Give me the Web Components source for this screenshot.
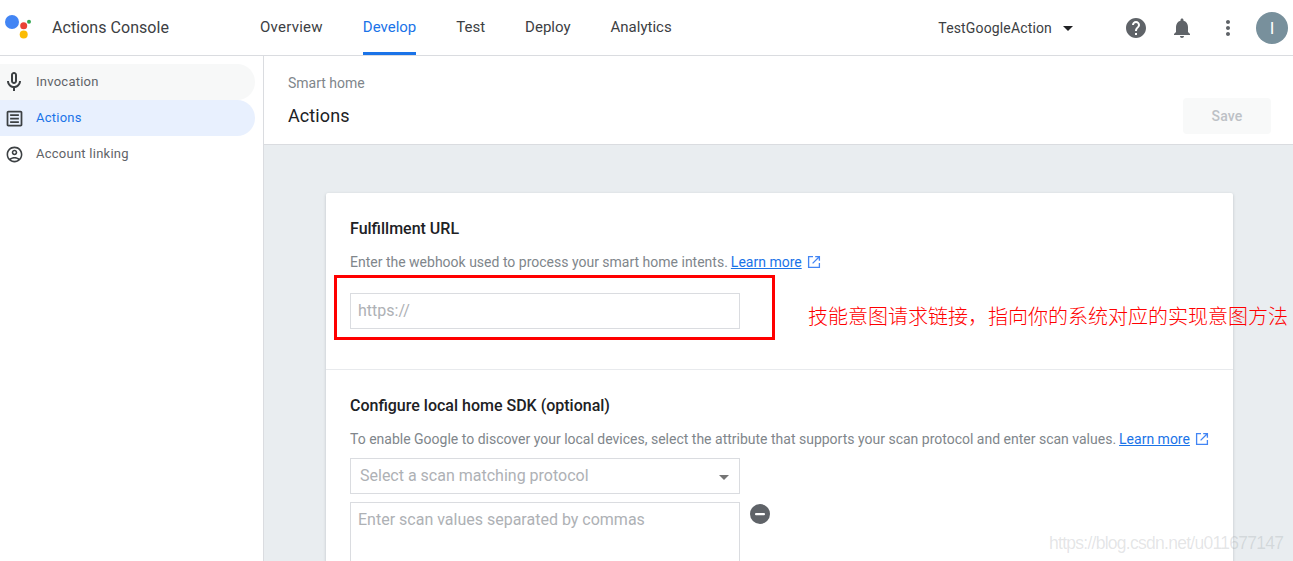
<!DOCTYPE html>
<html lang="en">
<head>
<meta charset="utf-8">
<title>Actions Console</title>
<style>
  html, body { margin: 0; height: 561px; overflow: hidden; background: #fff; }
  body { font-family: Roboto, "Liberation Sans", sans-serif; display: flex; flex-direction: column; }
</style>
</head>
<body>
<ac-header></ac-header>
<ac-layout>
  <ac-sidebar slot="side">
    <ac-nav-item icon="mic" size="24" hovered>Invocation</ac-nav-item>
    <ac-nav-item icon="article" size="21" active>Actions</ac-nav-item>
    <ac-nav-item icon="account" size="19">Account linking</ac-nav-item>
  </ac-sidebar>
  <ac-page-head slot="head" crumb="Smart home" heading="Actions"></ac-page-head>
  <ac-card slot="body">
    <ac-section heading="Fulfillment URL" size="177">
      <ac-hint>Enter the webhook used to process your smart home intents.</ac-hint>
      <ac-field spaced placeholder="https://"></ac-field>
    </ac-section>
    <ac-section heading="Configure local home SDK (optional)">
      <ac-hint>To enable Google to discover your local devices, select the attribute that supports your scan protocol and enter scan values.</ac-hint>
      <ac-field select placeholder="Select a scan matching protocol"></ac-field>
      <ac-field area removable placeholder="Enter scan values separated by commas"></ac-field>
    </ac-section>
  </ac-card>
</ac-layout>
<ac-note></ac-note>

<script>
const ICONS = {
  mic: '<path d="M12 14c1.66 0 3-1.34 3-3V5c0-1.66-1.34-3-3-3S9 3.34 9 5v6c0 1.66 1.34 3 3 3zm-1-9c0-.55.45-1 1-1s1 .45 1 1v6c0 .55-.45 1-1 1s-1-.45-1-1V5zm6 6c0 2.76-2.24 5-5 5s-5-2.24-5-5H5c0 3.53 2.61 6.43 6 6.92V21h2v-3.08c3.39-.49 6-3.39 6-6.92h-2z"/>',
  article: '<path d="M19 5v14H5V5h14m0-2H5c-1.1 0-2 .9-2 2v14c0 1.1.9 2 2 2h14c1.1 0 2-.9 2-2V5c0-1.1-.9-2-2-2zM17 17H7v-2h10v2zm0-4H7v-2h10v2zm0-4H7V7h10v2z"/>',
  account: '<path d="M12 2C6.48 2 2 6.48 2 12s4.48 10 10 10 10-4.48 10-10S17.52 2 12 2zM7.35 18.5C8.66 17.56 10.26 17 12 17s3.34.56 4.65 1.5c-1.31.94-2.91 1.5-4.65 1.5s-3.34-.56-4.65-1.5zm10.79-1.38C16.45 15.8 14.32 15 12 15s-4.45.8-6.14 2.12C4.7 15.73 4 13.95 4 12c0-4.42 3.58-8 8-8s8 3.58 8 8c0 1.95-.7 3.73-1.86 5.12zM12 6c-1.93 0-3.5 1.57-3.5 3.5S10.07 13 12 13s3.5-1.57 3.5-3.5S13.93 6 12 6zm0 5c-.83 0-1.5-.67-1.5-1.5S11.17 8 12 8s1.5.67 1.5 1.5S12.83 11 12 11z"/>',
  help: '<path d="M12 2C6.48 2 2 6.48 2 12s4.48 10 10 10 10-4.48 10-10S17.52 2 12 2zm1 17h-2v-2h2v2zm2.07-7.75l-.9.92C13.45 12.9 13 13.5 13 15h-2v-.5c0-1.1.45-2.1 1.17-2.83l1.24-1.26c.37-.36.59-.86.59-1.41 0-1.1-.9-2-2-2s-2 .9-2 2H8c0-2.21 1.79-4 4-4s4 1.79 4 4c0 .88-.36 1.68-.93 2.25z"/>',
  bell: '<path d="M12 22c1.1 0 2-.9 2-2h-4c0 1.1.89 2 2 2zm6-6v-5c0-3.07-1.64-5.64-4.5-6.32V4c0-.83-.67-1.5-1.5-1.5s-1.5.67-1.5 1.5v.68C7.63 5.36 6 7.92 6 11v5l-2 2v1h16v-1l-2-2z"/>',
  more: '<path d="M12 8c1.1 0 2-.9 2-2s-.9-2-2-2-2 .9-2 2 .9 2 2 2zm0 2c-1.1 0-2 .9-2 2s.9 2 2 2 2-.9 2-2-.9-2-2-2zm0 6c-1.1 0-2 .9-2 2s.9 2 2 2 2-.9 2-2-.9-2-2-2z"/>'
};

function icon(name, size) {
  return `<svg width="${size}" height="${size}" viewBox="0 0 24 24" fill="currentColor">${ICONS[name]}</svg>`;
}

class AcHeader extends HTMLElement {
  connectedCallback() {
    const root = this.attachShadow({ mode: "open" });
    root.innerHTML = `
      <style>
        :host { display: flex; align-items: stretch; height: 55px; flex: none; border-bottom: 1px solid #dadce0; }
        .logo { width: 52px; flex: none; }
        .logo svg { display: block; }
        .name { width: 200px; flex: none; font-size: 16px; color: #3c4043; line-height: 55px; letter-spacing: .05px; }
        nav { display: flex; gap: 40px; margin-left: 8px; }
        nav a { display: block; font-size: 15px; line-height: 55px; color: #3c4043; }
        nav a.wide { letter-spacing: .25px; }
        nav a.on { color: #1a73e8; box-shadow: inset 0 -3px 0 #1a73e8; }
        .right { margin-left: auto; display: flex; align-items: center; }
        .project { font-size: 14px; color: #3c4043; letter-spacing: .15px; }
        .caret { width: 0; height: 0; margin: 2px 0 0 11px; border: 5px solid transparent; border-top-color: #202124; border-bottom: 0; }
        .icons { display: flex; align-items: center; color: #5f6368; margin-left: 51px; gap: 22px; }
        .icons svg { display: block; }
        .avatar { width: 32px; height: 32px; border-radius: 50%; background: #78909c; color: #fff; font-size: 17px; line-height: 32px; text-align: center; margin: 0 5px 0 16px; }
      </style>
      <div class="logo">
        <svg width="52" height="55" viewBox="0 0 52 55">
          <circle cx="12" cy="22" r="7" fill="#4285f4"/>
          <circle cx="23.7" cy="25.7" r="3.5" fill="#ea4335"/>
          <circle cx="23.7" cy="34.4" r="4" fill="#fbbc04"/>
          <circle cx="29" cy="21.7" r="2" fill="#34a853"/>
        </svg>
      </div>
      <div class="name">Actions Console</div>
      <nav>
        <a class="wide">Overview</a><a class="on">Develop</a><a>Test</a><a>Deploy</a><a>Analytics</a>
      </nav>
      <div class="right">
        <span class="project">TestGoogleAction</span><span class="caret"></span>
        <div class="icons">${icon("help", 24)}${icon("bell", 24)}${icon("more", 24)}</div>
        <div class="avatar">I</div>
      </div>`;
  }
}

class AcLayout extends HTMLElement {
  constructor() {
    super();
    this.attachShadow({ mode: "open" }).innerHTML = `
      <style>
        :host { display: grid; grid-template-columns: 264px 1fr; grid-template-rows: 89px 1fr; flex: 1; min-height: 0; overflow: hidden; }
        .side { grid-row: 1 / 3; border-right: 1px solid #dadce0; }
        .head { border-bottom: 1px solid #dadce0; }
        .body { background: #e9edf0; padding: 48px 60px 0 62px; min-height: 0; overflow: hidden; }
      </style>
      <div class="side"><slot name="side"></slot></div>
      <div class="head"><slot name="head"></slot></div>
      <div class="body"><slot name="body"></slot></div>`;
  }
}

class AcSidebar extends HTMLElement {
  constructor() {
    super();
    this.attachShadow({ mode: "open" }).innerHTML = `
      <style>
        :host { display: flex; flex-direction: column; padding: 8px 8px 0 0; }
      </style>
      <slot></slot>`;
  }
}

class AcNavItem extends HTMLElement {
  connectedCallback() {
    const root = this.attachShadow({ mode: "open" });
    root.innerHTML = `
      <style>
        :host { display: flex; align-items: center; height: 36px; border-radius: 0 18px 18px 0; font-size: 13px; color: #5f6368; padding-left: 2px; gap: 10px; letter-spacing: .25px; }
        :host([hovered]) { background: #f7f8f8; }
        :host([active]) { background: #e8f0fe; color: #1a73e8; }
        .ic { width: 24px; height: 24px; display: flex; align-items: center; justify-content: center; color: #3c4043; flex: none; }
        svg { display: block; }
        .txt { margin-bottom: 2px; }
      </style>
      <span class="ic">${icon(this.getAttribute("icon"), this.getAttribute("size"))}</span>
      <span class="txt"><slot></slot></span>`;
  }
}

class AcPageHead extends HTMLElement {
  connectedCallback() {
    const root = this.attachShadow({ mode: "open" });
    root.innerHTML = `
      <style>
        :host { display: block; height: 88px; padding: 19px 22px 0 24px; box-sizing: border-box; }
        .crumb { font-size: 14px; line-height: 16px; color: #80868b; }
        .row { display: flex; align-items: flex-start; justify-content: space-between; margin-top: 7px; }
        h1 { margin: 6px 0 0; font-size: 18px; font-weight: 400; color: #202124; line-height: 24px; letter-spacing: .1px; }
        button { width: 88px; height: 36px; border: 0; border-radius: 4px; background: #f8f9f9; color: #bdc1c6; font: 500 14px Roboto, sans-serif; letter-spacing: .2px; }
      </style>
      <div class="crumb">${this.getAttribute("crumb")}</div>
      <div class="row">
        <h1>${this.getAttribute("heading")}</h1>
        <button>Save</button>
      </div>`;
  }
}

class AcCard extends HTMLElement {
  constructor() {
    super();
    this.attachShadow({ mode: "open" }).innerHTML = `
      <style>
        :host { display: block; background: #fff; border-radius: 2px; box-shadow: 0 1px 3px rgba(60,64,67,.25); }
        ::slotted(ac-section:not(:last-child)) { border-bottom: 1px solid #e8eaed; }
      </style>
      <slot></slot>`;
  }
}

class AcSection extends HTMLElement {
  connectedCallback() {
    const root = this.attachShadow({ mode: "open" });
    const size = this.getAttribute("size");
    root.innerHTML = `
      <style>
        :host { display: block; padding: 25px 24px 0; height: ${size ? size + "px" : "auto"}; box-sizing: border-box; }
        h2 { margin: 0 0 12px; font-size: 16px; font-weight: 500; line-height: 22px; color: #202124; }
        .list { display: flex; flex-direction: column; gap: 8px; }
      </style>
      <h2>${this.getAttribute("heading")}</h2>
      <div class="list"><slot></slot></div>`;
  }
}

class AcHint extends HTMLElement {
  constructor() {
    super();
    this.attachShadow({ mode: "open" }).innerHTML = `
      <style>
        :host { display: flex; align-items: center; font-size: 14px; line-height: 20px; color: #80868b; white-space: nowrap; margin-bottom: 1px; }
        a { color: #1a73e8; text-decoration: underline; margin-left: 3px; }
        svg { display: block; margin-left: 5px; }
      </style>
      <span><slot></slot></span>
      <a>Learn more</a>
      <svg width="14" height="14" viewBox="0 0 14 14" fill="none" stroke="#4285f4" stroke-width="1.3">
        <path d="M6 1.6H1.6v10.8h10.8V8"/><path d="M5.6 8.4 12 2M8.2 1.6h4.2v4.2"/>
      </svg>`;
  }
}

class AcField extends HTMLElement {
  connectedCallback() {
    const root = this.attachShadow({ mode: "open" });
    const isSelect = this.hasAttribute("select");
    const isArea = this.hasAttribute("area");
    const remove = this.hasAttribute("removable")
      ? `<svg class="remove" width="20" height="20" viewBox="0 0 20 20"><circle cx="10" cy="10" r="10" fill="#5f6368"/><rect x="5" y="9" width="10" height="2.2" rx="1" fill="#fff"/></svg>`
      : "";
    root.innerHTML = `
      <style>
        :host { display: flex; align-items: flex-start; gap: 10px; }
        :host([spaced]) { margin-top: 12px; }
        .box { width: 390px; box-sizing: border-box; height: ${isArea ? "120px" : "36px"}; border: 1px solid #dadce0; display: flex; align-items: ${isArea ? "flex-start" : "center"}; justify-content: space-between; padding: ${isArea ? "6px 7px" : isSelect ? "0 10px 0 9px" : "0 7px"}; font-size: 16px; line-height: 22px; color: #aeb1b5; flex: none; background: #fff; }
        .tri { width: 0; height: 0; border: 5px solid transparent; border-top-color: #757575; border-bottom: 0; margin-top: 2px; }
        .remove { margin-top: 2px; }
      </style>
      <div class="box"><span>${this.getAttribute("placeholder")}</span>${isSelect ? '<span class="tri"></span>' : ""}</div>
      ${remove}`;
  }
}

// the red annotation and the blog watermark sit on top of the screenshot
class AcNote extends HTMLElement {
  constructor() {
    super();
    this.attachShadow({ mode: "open" }).innerHTML = `
      <style>
        :host { position: absolute; inset: 0; display: block; pointer-events: none; overflow: hidden; }
        .frame { position: absolute; left: 334px; top: 275px; width: 441px; height: 65px; box-sizing: border-box; border: 3px solid #f00; }
        .label { position: absolute; left: 808px; top: 303px; font: 300 20px/26px "Noto Sans CJK SC", sans-serif; color: #f00; white-space: nowrap; }
        .mark { position: absolute; left: 1049px; top: 532px; font: 17.5px/22px "Liberation Sans", sans-serif; letter-spacing: -.73px; color: rgba(120,125,130,.2); white-space: nowrap; }
      </style>
      <div class="frame"></div>
      <div class="label">技能意图请求链接，指向你的系统对应的实现意图方法</div>
      <div class="mark">https://blog.csdn.net/u011677147</div>`;
  }
}

customElements.define("ac-header", AcHeader);
customElements.define("ac-layout", AcLayout);
customElements.define("ac-sidebar", AcSidebar);
customElements.define("ac-nav-item", AcNavItem);
customElements.define("ac-page-head", AcPageHead);
customElements.define("ac-card", AcCard);
customElements.define("ac-section", AcSection);
customElements.define("ac-hint", AcHint);
customElements.define("ac-field", AcField);
customElements.define("ac-note", AcNote);
</script>
</body>
</html>
